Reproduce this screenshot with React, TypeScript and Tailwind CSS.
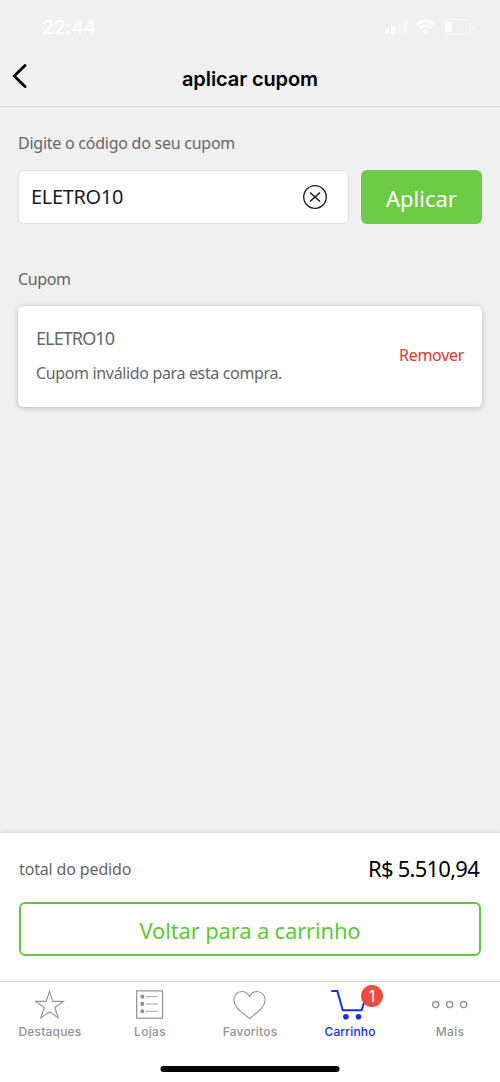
import { useState } from 'react';
import type { ReactNode } from 'react';

interface Tab {
  id: string;
  label: string;
  labelClass: string;
  icon: ReactNode;
  badge?: number;
}

const TABS: Tab[] = [
  {
    id: 'destaques',
    label: 'Destaques',
    labelClass: 'tracking-[0.2px]',
    icon: (
      <svg width="30" height="30" viewBox="0 0 30 30" fill="none" stroke="currentColor" strokeWidth="1.1">
        <path d="M14.5 1.4 L17.8 11.4 L28.3 11.4 L19.8 17.7 L23.3 27.9 L14.5 21.8 L5.7 27.9 L9.2 17.7 L0.7 11.4 L11.2 11.4 Z" />
      </svg>
    ),
  },
  {
    id: 'lojas',
    label: 'Lojas',
    labelClass: 'tracking-[0.3px]',
    icon: (
      <svg width="30" height="30" viewBox="0 0 30 30" fill="none" stroke="currentColor">
        <rect x="1.7" y="0.9" width="25.8" height="27.3" strokeWidth="1.2" />
        <path d="M10.5 6.6h12.5M10.5 14h12.5M10.5 21.4h12.5" strokeWidth="0.8" />
        <path d="M5.6 4.8h3.4v3.7H5.6zM5.6 12.1h3.4v3.7H5.6zM5.6 19.4h3.4v3.7H5.6z" fill="currentColor" stroke="none" />
      </svg>
    ),
  },
  {
    id: 'favoritos',
    label: 'Favoritos',
    labelClass: 'tracking-[0.2px]',
    icon: (
      <svg width="34" height="30" viewBox="0 0 34 30" fill="none" stroke="currentColor" strokeWidth="1.1">
        <path d="M16.5 6.5 C14.7 3.2 12.2 1.5 9 1.5 C4.5 1.5 0.9 5.2 0.9 9.8 C0.9 17.4 8.6 22 16.5 28.6 C24.4 22 32.1 17.4 32.1 9.8 C32.1 5.2 28.5 1.5 24 1.5 C20.8 1.5 18.3 3.2 16.5 6.5 Z" />
      </svg>
    ),
  },
  {
    id: 'carrinho',
    label: 'Carrinho',
    labelClass: 'tracking-[0.15px]',
    badge: 1,
    icon: (
      <svg width="38" height="30" viewBox="0 0 38 30" fill="none" stroke="currentColor" strokeWidth="2">
        <path d="M0.3 1 H6.3 L11.8 20.2 H30.6 L34.4 8.5" />
        <circle cx="14.9" cy="26.7" r="2.8" fill="currentColor" stroke="none" />
        <circle cx="27.5" cy="26.7" r="2.8" fill="currentColor" stroke="none" />
      </svg>
    ),
  },
  {
    id: 'mais',
    label: 'Mais',
    labelClass: 'tracking-[0.35px]',
    icon: (
      <svg width="38" height="30" viewBox="0 0 38 30" fill="none" stroke="currentColor" strokeWidth="1.3">
        <circle cx="4.7" cy="14.6" r="3.1" />
        <circle cx="18.7" cy="14.6" r="3.1" />
        <circle cx="32.7" cy="14.6" r="3.1" />
      </svg>
    ),
  },
];

function StatusBar() {
  return (
    <div className="flex h-[54px] items-center justify-between pl-[42px] pr-[25px] text-white">
      <span className="pt-px text-[19px] font-semibold leading-none tracking-[-0.2px]">22:44</span>
      <div className="flex items-center gap-[7.5px]">
        <svg width="23" height="16" viewBox="0 0 23 16" fill="currentColor">
          <rect x="0" y="10" width="4.2" height="5" rx="1" />
          <rect x="6" y="7.6" width="4.2" height="7.4" rx="1" />
          <rect x="12" y="4" width="4.2" height="11" rx="1" opacity="0.35" />
          <rect x="18" y="1" width="4.2" height="14" rx="1" opacity="0.35" />
        </svg>
        <svg width="19" height="16" viewBox="0 0 19 16" fill="none" stroke="currentColor" strokeWidth="2.7">
          <path d="M1 5.7 C5.8 0.8 13.2 0.8 18 5.7" />
          <path d="M4.1 9 C7.2 6 11.8 6 14.9 9" />
          <path d="M6.4 12 C8.2 10.4 10.8 10.4 12.6 12 L9.5 15.2 Z" fill="currentColor" stroke="none" />
        </svg>
        <svg width="33" height="16" viewBox="0 0 33 16" fill="none">
          <rect x="0.7" y="0.7" width="28" height="14.4" rx="4" stroke="currentColor" strokeWidth="1.2" opacity="0.5" />
          <rect x="2.7" y="2.8" width="7.4" height="10.2" rx="2" fill="currentColor" />
          <path d="M30.4 5.5 C32.2 6.2 32.2 9.6 30.4 10.3 Z" fill="currentColor" opacity="0.6" />
        </svg>
      </div>
    </div>
  );
}

function TabBar({ active, onSelect }: { active: string; onSelect: (id: string) => void }) {
  return (
    <nav className="grid h-[101px] grid-cols-5 border-t border-[#dadada] bg-white font-['Inter',sans-serif]">
      {TABS.map((tab) => (
        <button
          key={tab.id}
          onClick={() => onSelect(tab.id)}
          className={`flex h-[60px] flex-col items-center pt-[8px] ${
            tab.id === active ? 'text-[#142bf2]' : 'text-[#929292]'
          }`}
        >
          <span className="relative">
            {tab.icon}
            {tab.badge && (
              <span className="absolute -top-[5px] left-[30px] flex size-[22px] items-center justify-center rounded-full bg-[#ee4b3c] text-[16px] leading-none text-white">
                {tab.badge}
              </span>
            )}
          </span>
          <span className={`mt-[4px] whitespace-nowrap text-[12px] font-medium leading-[15px] ${tab.labelClass}`}>
            {tab.label}
          </span>
        </button>
      ))}
    </nav>
  );
}

export default function App() {
  const [code, setCode] = useState('ELETRO10');
  const [activeTab, setActiveTab] = useState('carrinho');

  return (
    <div className="flex h-[1082px] w-[500px] flex-col overflow-hidden bg-[#f0f0f0] font-['Noto_Sans',sans-serif] text-[#666666]">
      {/* Header */}
      <header className="h-[107px] shrink-0 border-b border-[#d4d4d4] font-['Inter',sans-serif]">
        <StatusBar />
        <div className="grid h-[50px] grid-cols-[1fr_auto_1fr] items-center">
          <button className="pl-[12px] pb-[6px] text-black" aria-label="Voltar">
            <svg width="16" height="24" viewBox="0 0 16 24" fill="none" stroke="currentColor" strokeWidth="2.8">
              <path d="M13 1.5 L2.2 12 L13 22.5" strokeLinecap="round" />
            </svg>
          </button>
          <h1 className="whitespace-nowrap text-[20px] font-semibold leading-none tracking-[-0.1px] text-black">
            aplicar cupom
          </h1>
        </div>
      </header>

      <main className="flex-1 px-[18px]">
        {/* Coupon form */}
        <label
          htmlFor="cupom"
          className="mt-[24px] block whitespace-nowrap text-[16px] leading-[24px] tracking-[-0.25px]"
        >
          Digite o código do seu cupom
        </label>
        <div className="mt-[15px] flex gap-[12px]">
          <div className="flex h-[54px] w-[331px] items-center rounded-[6px] border border-[#e0e0e0] bg-white pl-[12px] pr-[20px]">
            <input
              id="cupom"
              value={code}
              onChange={(e) => setCode(e.target.value)}
              className="min-w-0 flex-1 bg-transparent text-[20px] tracking-[-0.35px] text-[#1c1c1c] outline-none"
            />
            <button onClick={() => setCode('')} aria-label="Limpar" className="text-[#1c1c1c]">
              <svg width="26" height="26" viewBox="0 0 26 26" fill="none" stroke="currentColor" strokeWidth="1.3">
                <circle cx="13" cy="13" r="11.3" />
                <path d="M8 8.5 L18 17.5 M18 8.5 L8 17.5" strokeWidth="1.6" />
              </svg>
            </button>
          </div>
          <button className="h-[54px] w-[121px] rounded-[6px] bg-[#6cca45] pt-[2px] text-[22px] leading-none text-white">
            Aplicar
          </button>
        </div>

        {/* Applied coupon */}
        <h2 className="mt-[43px] text-[16px] leading-[24px] tracking-[-0.4px]">Cupom</h2>
        <div className="mt-[15px] flex h-[101px] items-center justify-between rounded-[5px] bg-white px-[18px] pb-[3px] shadow-[0_0_2px_rgba(0,0,0,0.12),0_1px_6px_rgba(0,0,0,0.2)]">
          <div>
            <p className="text-[18px] leading-[26px] tracking-[-0.9px]">ELETRO10</p>
            <p className="mt-[10px] whitespace-nowrap text-[16px] leading-[24px] tracking-[-0.35px]">
              Cupom inválido para esta compra.
            </p>
          </div>
          <button className="text-[16px] leading-[24px] tracking-[-0.3px] text-[#e6342b]">Remover</button>
        </div>
      </main>

      {/* Order total */}
      <section className="h-[148px] shrink-0 bg-white px-[19px] pt-[19px] shadow-[0_0_5px_rgba(0,0,0,0.2)]">
        <div className="flex h-[34px] items-center justify-between">
          <span className="text-[16px] tracking-[-0.15px]">total do pedido</span>
          <span className="whitespace-nowrap pb-[2px] pr-[2px] text-[22px] tracking-[-0.75px] text-black">
            R$ 5.510,94
          </span>
        </div>
        <button className="mt-[16px] h-[54px] w-full whitespace-nowrap rounded-[6px] border-2 border-[#65c740] pt-[2px] text-[22px] leading-none tracking-[-0.17px] text-[#5cc936]">
          Voltar para a carrinho
        </button>
      </section>

      <div className="relative shrink-0">
        <TabBar active={activeTab} onSelect={setActiveTab} />
        <div className="absolute bottom-[10px] left-1/2 h-[6px] w-[179px] -translate-x-1/2 rounded-full bg-black" />
      </div>
    </div>
  );
}
